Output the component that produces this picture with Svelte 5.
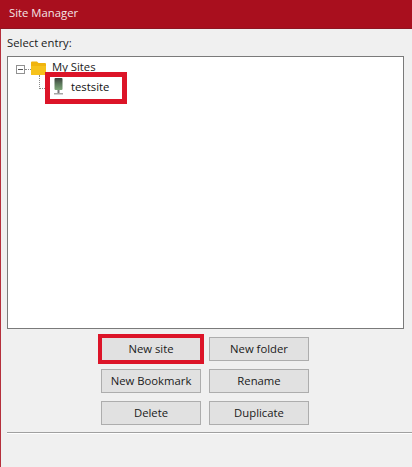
<script>
    let sites = ["testsite"];
</script>

<div class="window">
    <div class="titlebar">Site Manager</div>
    <div class="body">
        <div class="label">Select entry:</div>
        <div class="tree">
            <div class="row root">
                <span class="expander"></span>
                <span class="hdots"></span>
                <svg class="folder" width="15" height="14" viewBox="0 0 15 14">
                    <path d="M0 1.500q0-1 1-1h5l1.500 1.500h6.500q1 0 1 1v10q0 1-1 1H1q-1 0-1-1z" fill="#f0b40e" />
                    <path d="M0 5h15v8q0 1-1 1H1q-1 0-1-1z" fill="#f6c21c" />
                </svg>
                <span class="name">My Sites</span>
            </div>
            {#each sites as site}
                <div class="row child">
                    <span class="dots"></span>
                    <span class="marked">
                        <svg class="server" width="9" height="17" viewBox="0 0 9 17">
                            <defs>
                                <linearGradient id="screen" x1="0" y1="0" x2="0" y2="1">
                                    <stop offset="0" stop-color="#3c3f3d" />
                                    <stop offset="0.5" stop-color="#5d7a5c" />
                                    <stop offset="1" stop-color="#7ea77a" />
                                </linearGradient>
                            </defs>
                            <rect x="0.500" y="0" width="8" height="12" rx="1" fill="url(#screen)" />
                            <rect x="3.500" y="12" width="2" height="3" fill="#777" />
                            <rect x="0" y="15" width="9" height="1.500" fill="#a5a5a5" />
                        </svg>
                        <span class="site">{site}</span>
                    </span>
                </div>
            {/each}
        </div>
        <div class="buttons">
            <button class="marked-btn">New site</button>
            <button>New folder</button>
            <button>New Bookmark</button>
            <button>Rename</button>
            <button>Delete</button>
            <button>Duplicate</button>
        </div>
        <div class="rule"></div>
    </div>
</div>

<style>
    :global(body) {
        background: #f0f0f0;
    }

    .window {
        height: 467px;
        display: flex;
        flex-direction: column;
        font-family: "Open Sans", "Noto Sans", sans-serif;
        font-size: 11.3px;
        color: #1a1a1a;
        overflow: hidden;
    }

    .titlebar {
        height: 28px;
        line-height: 26px;
        padding-left: 9px;
        background: #a90f1e;
        border-bottom: 1px solid #8f1522;
        color: #f4e6e6;
    }

    .body {
        flex: 1;
        background: #f0f0f0;
        border-left: 1px solid #b5303c;
        padding: 6px 0 0 1px;
    }

    .label {
        margin-left: 5px;
        height: 21px;
        line-height: 15px;
    }

    .tree {
        margin-left: 5px;
        height: 273px;
        width: 397px;
        box-sizing: border-box;
        background: #fff;
        border: 1px solid #7a7a7a;
        padding: 4px 0 0 8px;
    }

    .row {
        display: flex;
    }

    .root {
        height: 14px;
        align-items: center;
    }

    .expander {
        width: 9px;
        height: 9px;
        margin-top: 2px;
        box-sizing: border-box;
        border: 1px solid #919191;
        background: linear-gradient(#555, #555) center / 5px 1px no-repeat;
    }

    .hdots {
        width: 6px;
        margin-top: 2px;
        border-top: 1px dotted #8a8a8a;
    }

    .name {
        margin: -3px 0 0 6px;
    }

    .child {
        margin-top: -3px;
        padding-left: 23px;
    }

    .dots {
        width: 5px;
        height: 13px;
        margin-top: 3px;
        border-left: 1px dotted #8a8a8a;
        border-bottom: 1px dotted #8a8a8a;
    }

    /* red annotation drawn over the tree, it clips the row above */
    .marked {
        position: relative;
        display: flex;
        align-items: center;
        width: 82px;
        height: 32px;
        box-sizing: border-box;
        padding: 0 0 3px 4px;
        border: 5px solid #dc1428;
        background: #fff;
    }

    .site {
        margin-left: 8px;
        color: #111;
    }

    .buttons {
        display: grid;
        grid-template-columns: 100px 100px;
        grid-auto-rows: 24px;
        gap: 8px;
        margin: 8px 0 0 99px;
    }

    button {
        padding: 0 0 2px;
        font: inherit;
        color: inherit;
        background: #e1e1e1;
        border: 1px solid #adadad;
    }

    .marked-btn {
        outline: 4px solid #dc1428;
        outline-offset: -1px;
    }

    .rule {
        margin: 7px 0 0 5px;
        height: 1px;
        background: #a0a0a0;
        border-bottom: 1px solid #fff;
    }
</style>
